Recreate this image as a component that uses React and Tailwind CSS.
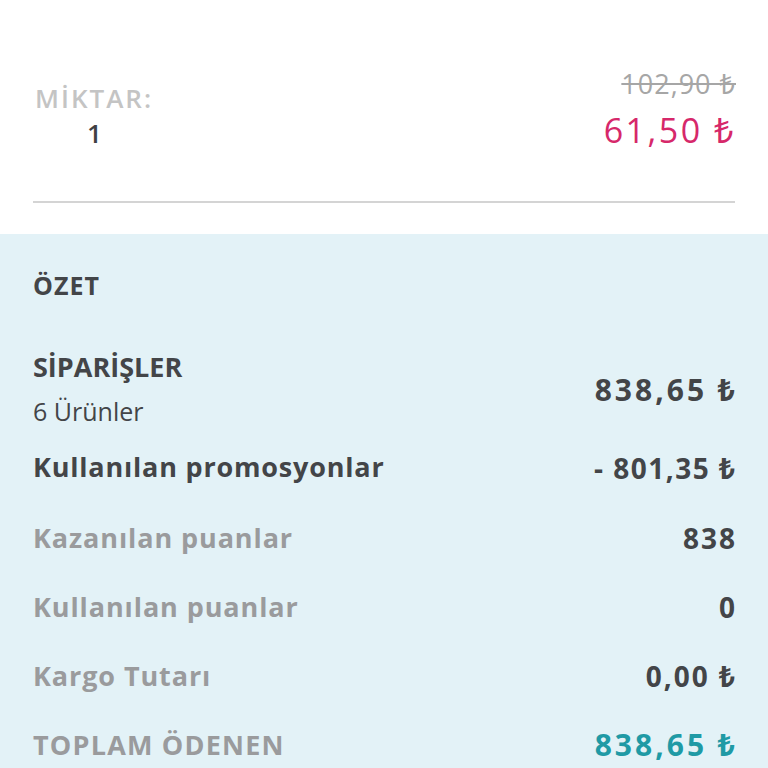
export default function App() {
  const font = { fontFamily: '"Open Sans", "Noto Sans", sans-serif' };
  return (
    <div className="w-[768px] h-[768px] overflow-hidden bg-white text-[#434548]" style={font}>
      <div className="h-[234px] px-[33px] pt-[68px] flex flex-col">
        <div className="flex justify-between items-start">
          <div className="flex flex-col items-start pt-[15px] pl-[2px]">
            <div className="h-[30px] flex items-center text-[26px] leading-none font-semibold tracking-[2px] text-[#c4c4c4]">MİKTAR:</div>
            <div className="h-[30px] mt-[5px] flex items-center text-[26px] leading-none font-semibold text-[#3f4144] pl-[52px]">1</div>
          </div>
          <div className="flex flex-col items-end">
            <div className="h-[30px] flex items-center text-[27px] leading-none tracking-[1px] mr-[-1px] text-[#a6a6a6] line-through decoration-[2px]">102,90 ₺</div>
            <div className="h-[40px] mt-[12px] flex items-center text-[34px] leading-none tracking-[2.5px] mr-[-1px] text-[#d6286a]">61,50 ₺</div>
          </div>
        </div>
        <div className="h-[2px] bg-[#d4d4d4] mt-[51px]"></div>
      </div>
      <div className="bg-[#e3f2f7] h-[534px] px-[33px] pt-[36px]">
        <div className="h-[30px] flex items-center text-[25px] leading-none font-bold tracking-[1px]">ÖZET</div>
        <div className="flex justify-between items-center mt-[51px]">
          <div className="flex flex-col">
            <div className="h-[30px] flex items-center text-[27px] leading-none font-bold">SİPARİŞLER</div>
            <div className="h-[30px] mt-[15px] flex items-center text-[25px] leading-none">6 Ürünler</div>
          </div>
          <div className="text-[30px] leading-none font-bold tracking-[3px] mr-[-3px] mt-[2px]">838,65 ₺</div>
        </div>
        <div className="flex justify-between items-center h-[40px] mt-[20px]">
          <div className="text-[27px] leading-none font-bold tracking-[0.8px]">Kullanılan promosyonlar</div>
          <div className="text-[28px] leading-none font-bold tracking-[1.5px] mr-[-1.5px] mt-[4px]">- 801,35 ₺</div>
        </div>
        <div className="flex justify-between items-center h-[69px] mt-[17px]">
          <div className="text-[27px] leading-none font-bold tracking-[0.9px] text-[#9a9b9d]">Kazanılan puanlar</div>
          <div className="text-[28px] leading-none font-bold tracking-[2px] mr-[-2px]">838</div>
        </div>
        <div className="flex justify-between items-center h-[69px]">
          <div className="text-[27px] leading-none font-bold tracking-[0.9px] text-[#9a9b9d]">Kullanılan puanlar</div>
          <div className="text-[28px] leading-none font-bold">0</div>
        </div>
        <div className="flex justify-between items-center h-[69px]">
          <div className="text-[27px] leading-none font-bold tracking-[0.9px] text-[#9a9b9d]">Kargo Tutarı</div>
          <div className="text-[28px] leading-none font-bold tracking-[2px] mr-[-2px]">0,00 ₺</div>
        </div>
        <div className="flex justify-between items-center h-[69px]">
          <div className="text-[27px] leading-none font-bold tracking-[1.2px] text-[#9a9b9d]">TOPLAM ÖDENEN</div>
          <div className="text-[30px] leading-none font-bold tracking-[3px] mr-[-3px] text-[#1f9aa5]">838,65 ₺</div>
        </div>
      </div>
    </div>
  );
}
